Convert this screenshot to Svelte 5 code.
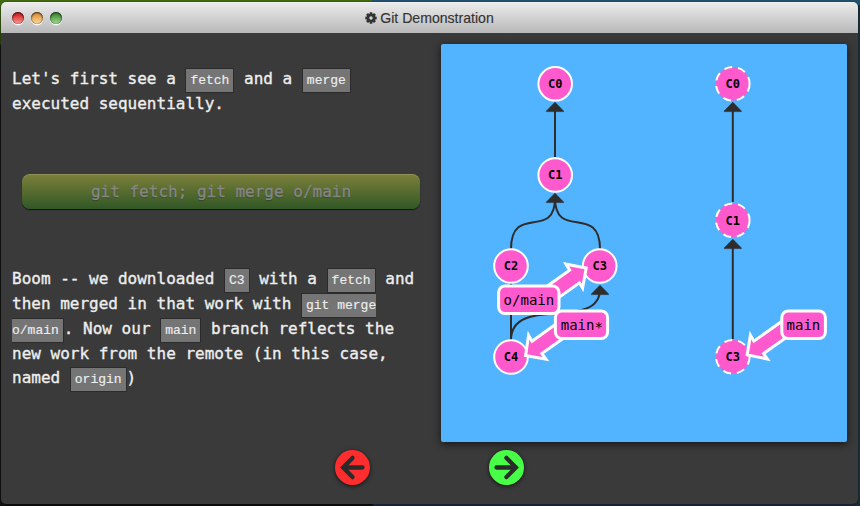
<script>
  const solid = [
    { id: 'C0', x: 555.2, y: 83.8 },
    { id: 'C1', x: 555.2, y: 175 },
    { id: 'C2', x: 511, y: 266 },
    { id: 'C3', x: 599.7, y: 266 },
    { id: 'C4', x: 511, y: 357 }
  ];
  const remote = [
    { id: 'C0', x: 732.8, y: 83.8 },
    { id: 'C1', x: 732.8, y: 220.3 },
    { id: 'C3', x: 732.8, y: 356.8 }
  ];
  const heads = [[555, 102.2], [555, 193.2], [600, 285.2], [732.8, 102.2], [732.8, 239.2]];
  const refs = [
    { name: 'o/main', x: 498.6, y: 286, w: 60.4, tx: 528.9, ty: 304.5,
      arrow: '548,285.4 569.7,270.2 566,264.2 586.2,268 582.6,288 579.4,282.8 560,296.6' },
    { name: 'main', star: true, x: 555.4, y: 311, w: 52.2, tx: 581.8, ty: 329.5,
      arrow: '555,324.8 532,341.2 528.6,335.3 525.6,355.5 545.9,359.2 541.8,353.5 562,339.2' },
    { name: 'main', x: 781.8, y: 311, w: 43.6, tx: 803.4, ty: 329.5,
      arrow: '782,321.2 753.9,341.2 750.4,335.2 747.2,354.9 767.4,359 763.6,353.5 787,337' }
  ];
</script>

<div class="desktop">
  <main class="window">
    <header>
      <div class="lights"><i class="red"></i><i class="amber"></i><i class="green"></i></div>
      <div class="title">
        <svg width="12" height="12" viewBox="-6 -6 12 12">
          <g fill="#333">
            {#each [0, 45, 90, 135] as a}
              <rect x="-1.4" y="-5.7" width="2.8" height="11.4" rx=".5" transform="rotate({a})" />
            {/each}
            <circle r="4.3" />
          </g>
          <circle r="1.7" fill="#d4d4d4" />
        </svg>
        <span>Git Demonstration</span>
      </div>
    </header>
    <div class="content">
      <section class="lesson">
        <p>Let's first see a <code>fetch</code> and a <code>merge</code><br />executed sequentially.</p>
        <div class="command">git fetch; git merge o/main</div>
        <p>Boom -- we downloaded <code>C3</code> with a <code>fetch</code> and<br />then merged in that work with <code>git merge<br />o/main</code>. Now our <code>main</code> branch reflects the<br />new work from the remote (in this case,<br />named <code>origin</code>)</p>
      </section>
      <div class="canvas">
        <svg width="406" height="398" viewBox="441 44 406 398">
          <g fill="none" stroke="#2d2d2d" stroke-width="2">
            <path d="M555 157V108" />
            <path d="M511 249C511 203 555 241 555 198" />
            <path d="M600 249C600 203 555 241 555 198" />
            <path d="M511 340V283" />
            <path d="M511 340C511 294 600 332 600 289" />
            <path d="M732.8 202V108M732.8 339V245" />
          </g>
          {#each heads as [x, y]}
            <path d="M{x} {y}l8.6 8.8v.6h-17.2v-.6z" fill="#2d2d2d" stroke="#2d2d2d" stroke-width=".6" />
          {/each}
          {#each solid as c}
            <circle cx={c.x} cy={c.y} r="16.8" class="node" />
            <text x={c.x} y={c.y + 4.3} class="id">{c.id}</text>
          {/each}
          {#each remote as c}
            <circle cx={c.x} cy={c.y} r="16.8" class="node dashed" />
            <text x={c.x} y={c.y + 4.3} class="id">{c.id}</text>
          {/each}
          {#each refs as r}
            <polygon points={r.arrow} class="ref" />
            <rect x={r.x} y={r.y} width={r.w} height="27.6" rx="6.5" class="ref" />
            <text x={r.tx} y={r.ty} class="name">{r.name}{#if r.star}<tspan dy="2.4">*</tspan>{/if}</text>
          {/each}
        </svg>
      </div>
    </div>
    <nav>
      <button class="prev" aria-label="Previous">
        <svg width="27" height="27" viewBox="-13.5 -13.5 27 27"><path d="M10 0H-9.2M0 -9.6L-9.4 0L0 9.6" /></svg>
      </button>
      <button class="next" aria-label="Next">
        <svg width="27" height="27" viewBox="-13.5 -13.5 27 27"><path d="M-10 0H9.2M0 -9.6L9.4 0L0 9.6" /></svg>
      </button>
    </nav>
  </main>
</div>

<style>
  .desktop {
    box-sizing: border-box;
    width: 860px;
    height: 506px;
    padding: 2px 1px 1px;
    overflow: hidden;
    background:
      linear-gradient(90deg, #42680d 372px, #22506f 372px) top / 100% 5px no-repeat,
      linear-gradient(90deg, transparent 855px, #1b2b36 855px),
      linear-gradient(#3c5e10 0, #29420c 43px, #111 46px, #111 100%) left / 5px 100% no-repeat,
      linear-gradient(90deg, #0b0b0c 372px, #192537 374px);
  }
  .window {
    display: flex;
    flex-direction: column;
    box-sizing: border-box;
    width: 857px;
    height: 502px;
    background: #3a3a3a;
    border-radius: 5px;
    overflow: hidden;
    box-shadow: 0 0 1px #111;
  }
  header {
    display: flex;
    align-items: center;
    flex: none;
    height: 31px;
    background: linear-gradient(#ebebeb, #b8b8b8);
    border-top: 1px solid #f0f0f0;
    box-sizing: border-box;
  }
  .lights {
    display: flex;
    gap: 7px;
    width: 120px;
    padding-left: 11px;
    box-sizing: border-box;
  }
  .lights i {
    width: 12px;
    height: 12px;
    border-radius: 50%;
    box-shadow: inset 0 1px 2px rgba(0, 0, 0, .75), inset 0 0 1px rgba(0, 0, 0, .6), 0 1.5px 0 rgba(255, 255, 255, .85);
  }
  .red { background: linear-gradient(#dd3434 30%, #ff9c98); }
  .amber { background: linear-gradient(#e3a04c 30%, #ffdc9c); }
  .green { background: linear-gradient(#4d9b40 30%, #a5dc94); }
  .title {
    display: flex;
    flex: 1;
    justify-content: center;
    align-items: center;
    gap: 3px;
    padding-right: 120px;
    font: 14.1px/20px "Liberation Sans", Arial, sans-serif;
    color: #333;
    -webkit-text-stroke: .15px #333;
  }
  .content { display: flex; flex: none; height: 409px; }
  .lesson {
    box-sizing: border-box;
    width: 440px;
    padding: 34px 0 0 11px;
    color: #eee;
    font: 16px/24.9px "DejaVu Sans Mono", monospace;
    white-space: nowrap;
    -webkit-text-stroke: .35px currentColor;
  }
  p { margin: 0; }
  code {
    padding: 4px;
    border: 1px solid #2b2b2b;
    background: #757575;
    color: #eee;
    font: 13px/16px "Liberation Mono", "Courier New", monospace;
    -webkit-text-stroke: .15px currentColor;
  }
  .command {
    box-sizing: border-box;
    width: 398px;
    height: 35px;
    margin: 57px 0 58px 10px;
    border-radius: 8px;
    background: linear-gradient(#7d803a, #305726);
    box-shadow: inset 0 1px 0 rgba(255, 255, 255, .15), 0 1px 1px rgba(0, 0, 0, .7);
    color: #868686;
    text-align: center;
    line-height: 35px;
    text-shadow: 0 1px 1px rgba(0, 0, 0, .35);
  }
  .canvas {
    width: 406px;
    height: 398px;
    margin-top: 11px;
    background: #52b3ff;
    border-radius: 2px;
    box-shadow: 0 2px 9px rgba(0, 0, 0, .65);
  }
  .canvas svg { display: block; }
  .node { fill: #ff5acd; stroke: #fff; stroke-width: 2; }
  .dashed { stroke-dasharray: 8 6; }
  .id {
    font: bold 12px "DejaVu Sans Mono", monospace;
    text-anchor: middle;
  }
  .ref { fill: #ff5acd; stroke: #fff; stroke-width: 3; }
  .name {
    font: 14px "DejaVu Sans Mono", monospace;
    text-anchor: middle;
  }
  nav {
    display: flex;
    justify-content: center;
    gap: 119px;
    padding: 7.5px 0 0 .5px;
  }
  button {
    display: flex;
    align-items: center;
    justify-content: center;
    width: 35px;
    height: 35px;
    padding: 0;
    border: 0;
    border-radius: 50%;
    box-shadow: 0 1px 4px rgba(0, 0, 0, .7);
  }
  .prev { background: #ff2d2d; }
  .next { background: #48ff48; }
  button path {
    fill: none;
    stroke: #2b2b2b;
    stroke-width: 4.3;
    stroke-linejoin: miter;
    stroke-linecap: round;
  }
</style>
